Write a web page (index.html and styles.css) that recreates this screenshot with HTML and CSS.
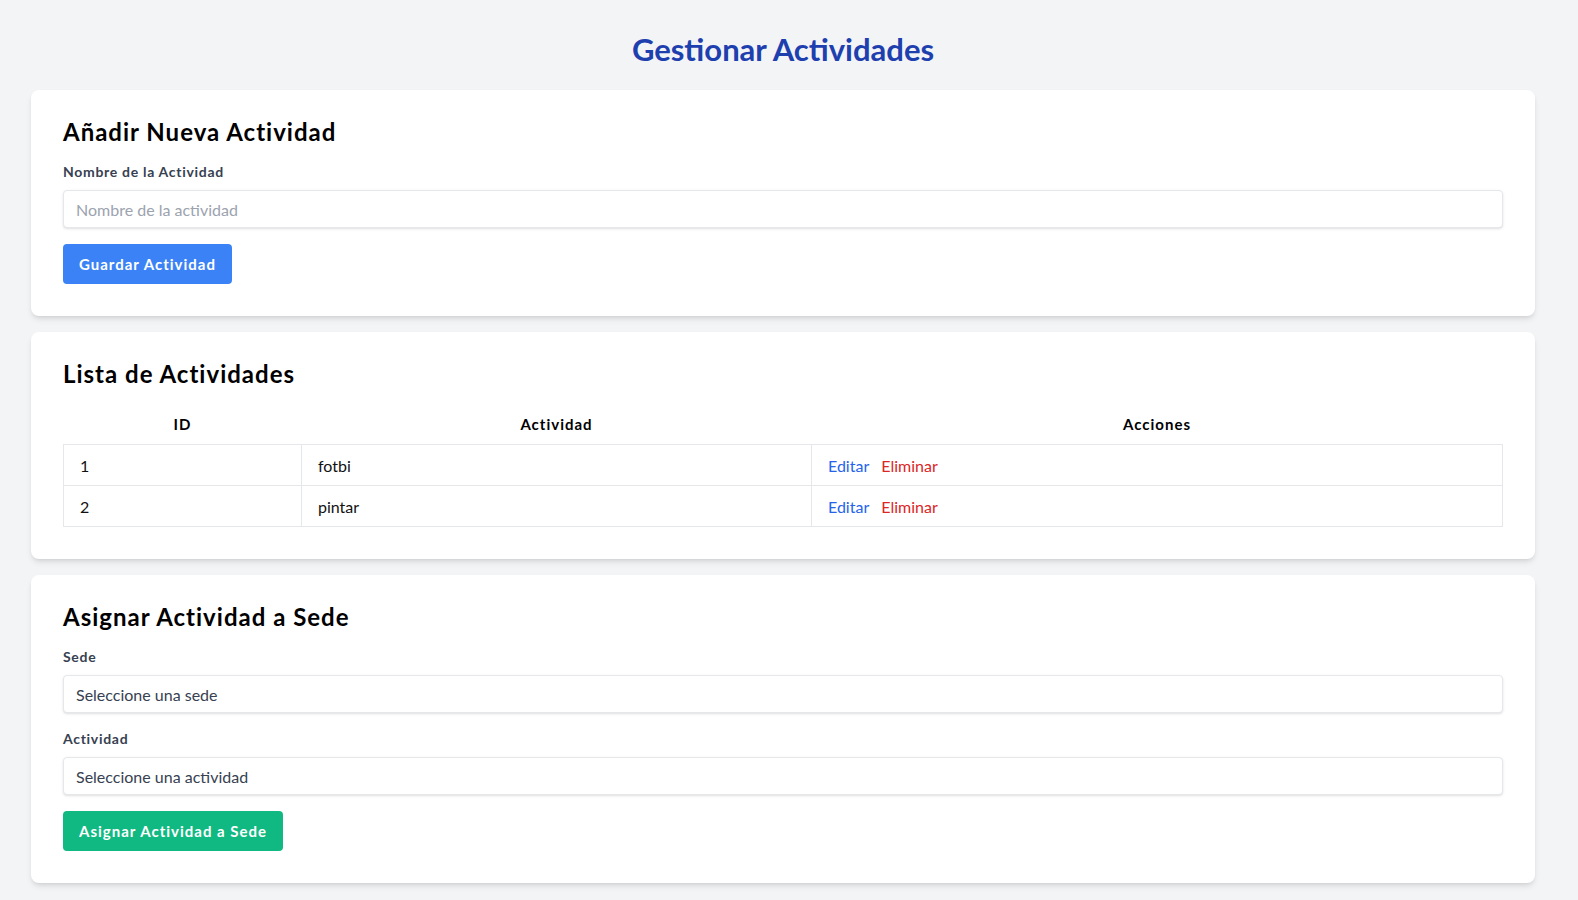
FILE: index.html
```html
<!DOCTYPE html>
<html lang="es">
<head>
<meta charset="utf-8">
<title>Gestionar Actividades</title>
<link rel="stylesheet" href="styles.css">
</head>
<body>
<div class="page">
  <h1 class="page-title">Gestionar Actividades</h1>

  <section class="card">
    <h2 class="card-title">Añadir Nueva Actividad</h2>
    <form class="form">
      <label class="label" for="nombre">Nombre de la Actividad</label>
      <input class="input" id="nombre" type="text" placeholder="Nombre de la actividad">
      <button class="btn btn-blue" type="button">Guardar Actividad</button>
    </form>
  </section>

  <section class="card">
    <h2 class="card-title">Lista de Actividades</h2>
    <table class="table">
      <colgroup>
        <col class="col-id">
        <col class="col-act">
        <col class="col-acc">
      </colgroup>
      <thead>
        <tr><th>ID</th><th>Actividad</th><th>Acciones</th></tr>
      </thead>
      <tbody>
        <tr>
          <td>1</td><td>fotbi</td>
          <td><a class="link link-edit" href="#">Editar</a><a class="link link-del" href="#">Eliminar</a></td>
        </tr>
        <tr>
          <td>2</td><td>pintar</td>
          <td><a class="link link-edit" href="#">Editar</a><a class="link link-del" href="#">Eliminar</a></td>
        </tr>
      </tbody>
    </table>
  </section>

  <section class="card">
    <h2 class="card-title">Asignar Actividad a Sede</h2>
    <form class="form">
      <label class="label" for="sede">Sede</label>
      <select class="input select" id="sede"><option>Seleccione una sede</option></select>
      <label class="label label-next" for="actividad">Actividad</label>
      <select class="input select" id="actividad"><option>Seleccione una actividad</option></select>
      <button class="btn btn-green" type="button">Asignar Actividad a Sede</button>
    </form>
  </section>
</div>
</body>
</html>
```

FILE: styles.css
```css
html {
  background: #f3f4f6;
}

body {
  margin: 0;
  padding-right: 12px;
  background: #f3f4f6;
  font-family: Lato, "Open Sans", Arial, sans-serif;
  color: #000;
}

.page {
  max-width: 1504px;
  margin: 0 auto;
  padding: 31px 0 32px;
}

.page-title {
  margin: 0 0 23px;
  text-align: center;
  font-size: 31px;
  line-height: 36px;
  font-weight: 700;
  color: #1e40af;
}

.card {
  background: #fff;
  border-radius: 8px;
  box-shadow: 0 4px 6px -1px rgba(0,0,0,.1), 0 2px 4px -2px rgba(0,0,0,.1);
  padding: 26px 32px 32px;
  margin-bottom: 16px;
}

.card-title {
  margin: 0 0 14px;
  font-size: 24px;
  line-height: 32px;
  font-weight: 700;
  letter-spacing: 1px;
  color: #000;
}

.form {
  display: flex;
  flex-direction: column;
  align-items: flex-start;
}

.label {
  display: block;
  font-size: 14px;
  line-height: 20px;
  font-weight: 700;
  letter-spacing: 0.7px;
  color: #374151;
  margin-bottom: 8px;
}
.label-next {
  margin-top: 16px;
}

.input {
  box-sizing: border-box;
  width: 100%;
  height: 38px;
  padding: 0 12px;
  border: 1px solid #e5e7eb;
  border-radius: 4px;
  box-shadow: 0 1px 3px 0 rgba(0,0,0,.1), 0 1px 2px -1px rgba(0,0,0,.1);
  background: #fff;
  font-family: inherit;
  font-size: 16px;
  color: #374151;
  outline: none;
}
.input::placeholder {
  color: #9ca3af;
}
.select {
  -webkit-appearance: none;
  appearance: none;
}

.btn {
  margin-top: 16px;
  height: 40px;
  padding: 0 16px;
  border: 0;
  border-radius: 4px;
  font-family: inherit;
  font-size: 15px;
  font-weight: 700;
  letter-spacing: 1px;
  color: #fff;
  cursor: pointer;
}
.btn-blue { background: #3b82f6; }
.btn-green { background: #10b981; }

.table {
  width: 100%;
  border-collapse: collapse;
  font-size: 16px;
}
.col-id { width: 238px; }
.col-act { width: 510px; }
.table th {
  height: 40px;
  padding: 0 16px;
  font-size: 15px;
  font-weight: 700;
  letter-spacing: 1px;
  text-align: center;
  color: #000;
}
.table td {
  height: 40px;
  padding: 0 16px;
  border: 1px solid #e5e7eb;
  color: #111;
}

.link {
  text-decoration: none;
  margin-right: 12px;
}
.link-edit { color: #2563eb; }
.link-del { color: #dc2626; }
```
